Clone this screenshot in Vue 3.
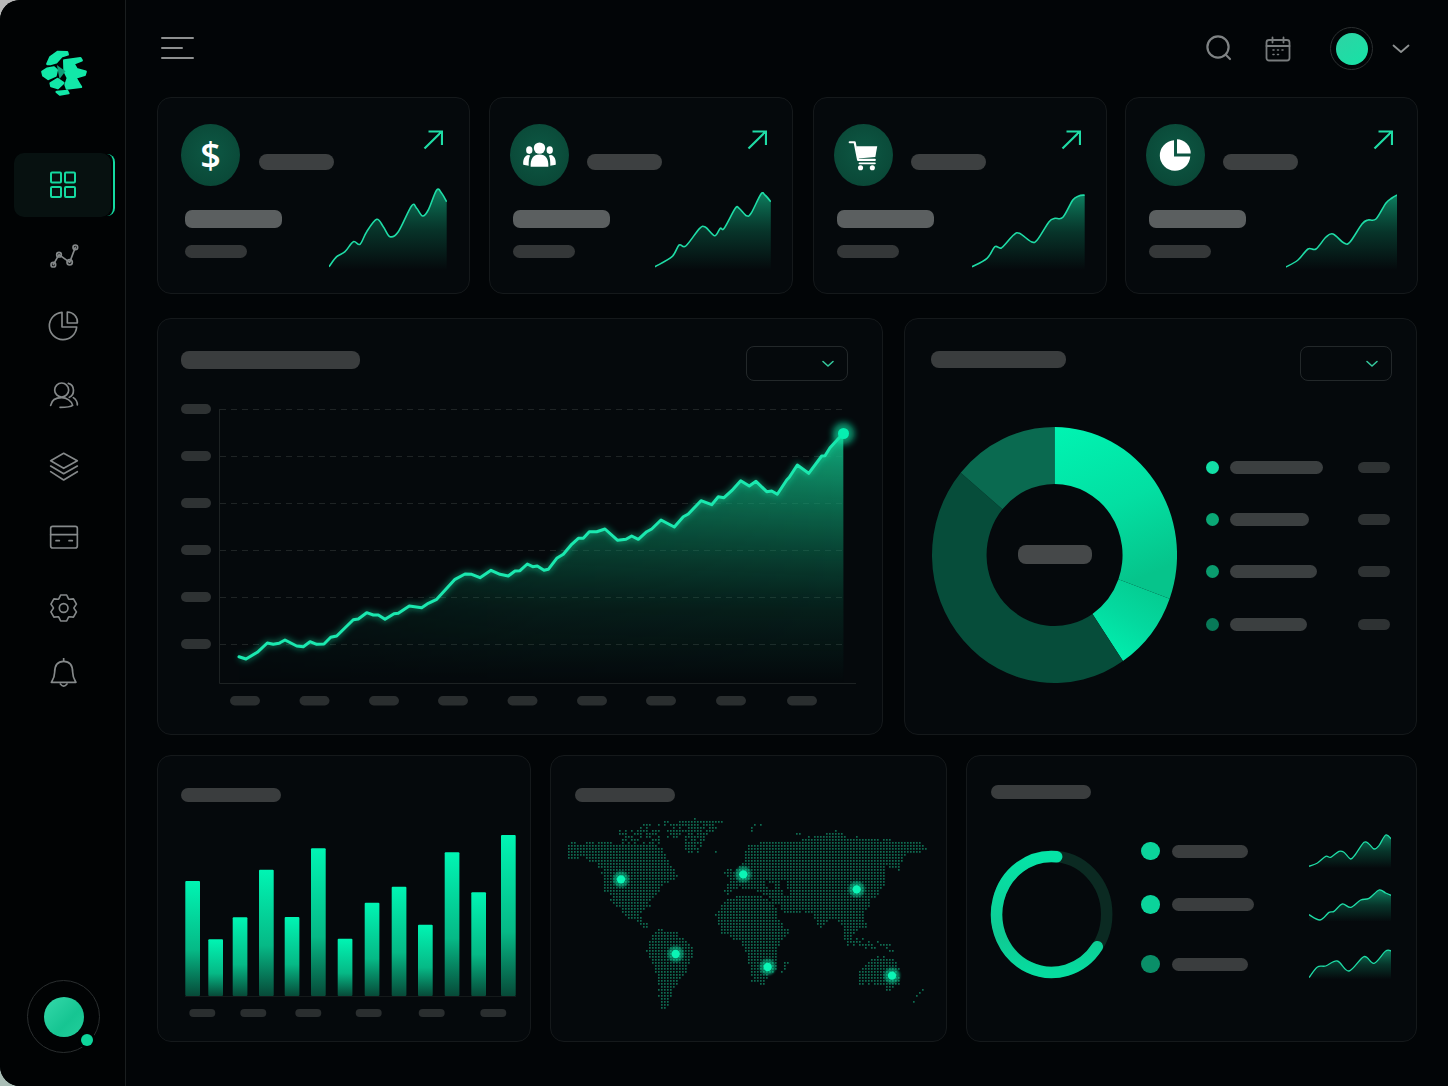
<template>
  <div class="app">
    <svg class="defs" width="0" height="0">
      <defs>
        <linearGradient id="sparkFill" x1="0" y1="0" x2="0" y2="1">
          <stop offset="0" stop-color="#10a87c" stop-opacity="0.75" />
          <stop offset="0.5" stop-color="#0b7a5a" stop-opacity="0.38" />
          <stop offset="1" stop-color="#0b7a5a" stop-opacity="0" />
        </linearGradient>
        <linearGradient id="barFill" x1="0" y1="0" x2="0" y2="1">
          <stop offset="0" stop-color="#00f5b3" />
          <stop offset="0.6" stop-color="#06b986" />
          <stop offset="1" stop-color="#074a38" />
        </linearGradient>
        <filter id="glow" x="-30%" y="-30%" width="160%" height="160%">
          <feGaussianBlur stdDeviation="3" />
        </filter>
      </defs>
    </svg>

    <aside class="sidebar">
      <svg class="logo" viewBox="115 145 160 150">
        <g fill="#12e8a8" stroke="#12e8a8" stroke-width="7" stroke-linejoin="round">
          <polygon points="143,193 152,172 175,156 203,157 205,164 186,170 170,188 152,193" />
          <polygon points="194,182 243,175 247,182 222,192 232,208 259,216 256,226 228,234 240,254 245,262 202,267 198,256 205,235 195,215" />
          <polygon points="128,216 142,207 163,203 172,211 168,228 146,238 131,228" />
          <polygon points="153,251 174,238 192,250 175,266 155,260" />
          <polygon points="171,277 203,274 207,281 181,285" />
        </g>
        <polygon points="172,196 198,215 180,238" fill="#0e9f78" />
      </svg>

      <nav class="nav">
        <div class="nav-item active">
          <svg width="36" height="36" viewBox="0 0 36 36" fill="none" stroke="#14d9a0" stroke-width="2">
            <rect x="6" y="5.5" width="10" height="10" rx="1" />
            <rect x="20" y="5.5" width="10" height="10" rx="1" />
            <rect x="6" y="20" width="10" height="10" rx="1" />
            <rect x="20" y="20" width="10" height="10" rx="1" />
          </svg>
        </div>
        <div v-for="item in navItems" :key="item.name" class="nav-item" :style="{ height: item.h + 'px' }">
          <svg width="36" height="36" :viewBox="item.x + ' ' + item.y + ' 108 108'" fill="none" stroke="#85898a" stroke-width="5" stroke-linecap="round" stroke-linejoin="round">
            <path v-for="d in item.paths" :key="d" :d="d" />
            <circle v-for="c in item.circles" :key="c[0] + '-' + c[1]" :cx="c[0]" :cy="c[1]" :r="c[2]" />
          </svg>
        </div>
      </nav>

      <div class="me">
        <div class="me-face"></div>
        <div class="me-dot"></div>
      </div>
    </aside>

    <main class="main">
      <header class="topbar">
        <div class="burger"><span></span><span class="short"></span><span></span></div>
        <div class="top-right">
          <svg class="top-search" width="28" height="28" viewBox="0 0 28 28" fill="none" stroke="#7f8384" stroke-width="2.2" stroke-linecap="round">
            <circle cx="13" cy="13" r="10.6" />
            <path d="M21 21l4 4" />
          </svg>
          <svg class="top-cal" width="26" height="26" viewBox="0 0 26 26" fill="none" stroke="#787c7d" stroke-width="1.8" stroke-linecap="round">
            <rect x="1.5" y="4" width="23" height="20.5" rx="2.5" />
            <path d="M1.5 10h23M7.5 1.5v5M18.5 1.5v5" />
            <path d="M8 14h1M12.5 14h1M17 14h1M8 18.5h1M12.5 18.5h1" stroke-width="1.6" />
          </svg>
          <div class="top-avatar"><div class="top-face"></div></div>
          <svg width="18" height="10" viewBox="0 0 18 10" fill="none" stroke="#8d9191" stroke-width="1.8" stroke-linecap="round" stroke-linejoin="round">
            <path d="M1.5 1.5L9 8l7.5-6.5" />
          </svg>
        </div>
      </header>

      <section class="stats">
        <article v-for="card in stats" :key="card.key" class="card stat">
          <div class="stat-left">
            <div class="stat-head">
              <div class="stat-icon">
                <span v-if="card.key === 'money'" class="dollar">$</span>
                <svg v-else-if="card.key === 'users'" width="59" height="62" viewBox="0 0 60 62" fill="#fff">
                  <circle cx="30" cy="24" r="5.8" />
                  <ellipse cx="19.6" cy="26" rx="3.2" ry="3.9" />
                  <ellipse cx="40.4" cy="26" rx="3.2" ry="3.9" />
                  <path d="M21 43c-.4-8 2.5-12.5 9-12.5S39.4 35 39 43z" />
                  <path d="M18.5 31c-3.5.5-5.5 4.5-5 10l5.5 1c0-5 .2-8 1.5-10.5z" />
                  <path d="M41.5 31c3.5.5 5.5 4.5 5 10l-5.5 1c0-5-.2-8-1.5-10.5z" />
                </svg>
                <svg v-else-if="card.key === 'cart'" width="59" height="62" viewBox="0 0 60 62" fill="#fff">
                  <path d="M16 18h5l3.5 18h17" fill="none" stroke="#fff" stroke-width="2.2" stroke-linecap="round" stroke-linejoin="round" />
                  <path d="M22.5 22H44l-2 11-17.5 1.5z" />
                  <path d="M26 39.5h15.5" fill="none" stroke="#fff" stroke-width="2" stroke-linecap="round" />
                  <circle cx="27" cy="44" r="2.6" />
                  <circle cx="39" cy="44" r="2.6" />
                </svg>
                <svg v-else width="59" height="62" viewBox="0 0 60 62" fill="#fff">
                  <path d="M28.5 16a15.5 15.5 0 1 0 16.5 16.5H28.5z" />
                  <path d="M31.5 15a14.5 14.5 0 0 1 14 14.5h-14z" />
                </svg>
              </div>
              <div class="pill stat-label"></div>
            </div>
            <div class="pill stat-value"></div>
            <div class="pill stat-sub"></div>
          </div>
          <div class="stat-right">
            <svg class="stat-arrow" width="20" height="20" viewBox="0 0 20 20" fill="none" stroke="#1fdca6" stroke-width="2.2">
              <path d="M1.5 18.5L18.8 1.5M5.5 1.5h13.5v13.5" />
            </svg>
            <svg class="spark" :width="card.spark.w" :height="card.spark.h" :viewBox="card.spark.box">
              <path :d="card.spark.area" fill="url(#sparkFill)" />
              <path :d="card.spark.line" fill="none" stroke="#1fdca6" stroke-width="1.6" />
            </svg>
          </div>
        </article>
      </section>

      <section class="middle">
        <article class="card trend">
          <div class="panel-head">
            <div class="pill trend-title"></div>
            <div class="select">
              <svg width="14" height="8" viewBox="0 0 14 8" fill="none" stroke="#35c79c" stroke-width="1.6" stroke-linecap="round" stroke-linejoin="round"><path d="M2 1.5L7 6l5-4.5" /></svg>
            </div>
          </div>
          <svg class="trend-chart" width="700" height="330" viewBox="170 390 700 330">
            <defs>
              <linearGradient id="trendFill" gradientUnits="userSpaceOnUse" x1="0" y1="433" x2="0" y2="683">
                <stop offset="0" stop-color="#12b784" stop-opacity="0.95" />
                <stop offset="0.35" stop-color="#0e9a6e" stop-opacity="0.58" />
                <stop offset="0.7" stop-color="#0a7a58" stop-opacity="0.2" />
                <stop offset="1" stop-color="#0a7a58" stop-opacity="0" />
              </linearGradient>
              <linearGradient id="trendFade" gradientUnits="userSpaceOnUse" x1="240" y1="0" x2="843" y2="0">
                <stop offset="0" stop-color="#fff" stop-opacity="0.3" />
                <stop offset="0.5" stop-color="#fff" stop-opacity="0.85" />
                <stop offset="1" stop-color="#fff" stop-opacity="1" />
              </linearGradient>
              <mask id="trendMask" maskUnits="userSpaceOnUse" x="170" y="390" width="700" height="330">
                <rect x="170" y="390" width="700" height="330" fill="url(#trendFade)" />
              </mask>
            </defs>
            <rect v-for="y in gridY" :key="'yl' + y" x="181" :y="y - 5" width="30" height="10" rx="5" fill="#2e3233" />
            <rect v-for="x in labelX" :key="'xl' + x" :x="x - 15" y="696" width="30" height="9.5" rx="4.7" fill="#2a2e2f" />
            <line v-for="y in gridY" :key="'g' + y" x1="220" x2="845" :y1="y + 0.5" :y2="y + 0.5" stroke="#1f2425" stroke-dasharray="6 5" />
            <path :d="trendArea" fill="url(#trendFill)" mask="url(#trendMask)" />
            <path d="M219.5 409V683.5H856" fill="none" stroke="#1d2223" />
            <path :d="trendLine" fill="none" stroke="#14e6aa" stroke-width="5" opacity="0.45" filter="url(#glow)" stroke-linejoin="round" />
            <path :d="trendLine" fill="none" stroke="#1be8af" stroke-width="3" stroke-linejoin="round" stroke-linecap="round" />
            <circle cx="843.5" cy="433.5" r="11" fill="#08e6a8" opacity="0.6" filter="url(#glow)" />
            <circle cx="843.5" cy="433.5" r="5.5" fill="#06eeb0" />
          </svg>
        </article>

        <article class="card donut-card">
          <div class="panel-head donut-head">
            <div class="pill donut-title"></div>
            <div class="select small">
              <svg width="14" height="8" viewBox="0 0 14 8" fill="none" stroke="#35c79c" stroke-width="1.6" stroke-linecap="round" stroke-linejoin="round"><path d="M2 1.5L7 6l5-4.5" /></svg>
            </div>
          </div>
          <div class="donut-body">
            <div class="donut-wrap">
              <svg width="245" height="256" viewBox="-100 -100 200 200" preserveAspectRatio="none">
                <defs>
                  <linearGradient id="seg1" x1="0" y1="0" x2="0.3" y2="1">
                    <stop offset="0" stop-color="#00f4b2" />
                    <stop offset="0.55" stop-color="#03dfa2" />
                    <stop offset="1" stop-color="#06c48b" />
                  </linearGradient>
                  <linearGradient id="seg2" x1="0.8" y1="0" x2="0.2" y2="1">
                    <stop offset="0" stop-color="#05c98e" />
                    <stop offset="0.5" stop-color="#04d99f" />
                    <stop offset="1" stop-color="#00f2b0" />
                  </linearGradient>
                </defs>
                <path v-for="seg in donutSegs" :key="seg.fill" :d="seg.d" :fill="seg.fill" />
              </svg>
              <div class="pill donut-center"></div>
            </div>
            <ul class="donut-legend">
              <li v-for="row in donutLegend" :key="row.w">
                <i class="legend-dot" :style="{ background: row.color }"></i>
                <span class="pill legend-bar" :style="{ width: row.w + 'px' }"></span>
                <span class="pill legend-val"></span>
              </li>
            </ul>
          </div>
        </article>
      </section>

      <section class="bottom">
        <article class="card bars-card">
          <div class="pill small-title"></div>
          <svg class="bars" width="350" height="210" viewBox="180 820 350 210">
            <line x1="185" x2="516" y1="996.5" y2="996.5" stroke="#14191a" />
            <rect v-for="b in bars" :key="b[0]" :x="b[0]" :y="996 - b[1]" width="14.7" :height="b[1]" rx="1" fill="url(#barFill)" />
            <rect v-for="x in barLabels" :key="x" :x="x" y="1009" width="26" height="8" rx="4" fill="#2a2e2f" />
          </svg>
        </article>

        <article class="card map-card">
          <div class="pill small-title"></div>
          <svg class="map" width="400" height="230" viewBox="0 0 1200 690">
            <path :d="mapDots" fill="#0f6b50" />
            <g v-for="pin in pins" :key="pin[0]">
              <circle :cx="pin[0]" :cy="pin[1]" r="24" fill="#08e6a8" opacity="0.5" filter="url(#glow)" />
              <circle :cx="pin[0]" :cy="pin[1]" r="12.5" fill="#0bf5b5" />
            </g>
          </svg>
        </article>

        <article class="card mini-card">
          <div class="pill small-title mini-title"></div>
          <div class="mini-body">
            <svg class="ring" width="130" height="135" viewBox="987 848 130 135" fill="none" stroke-width="11.5">
              <defs>
                <linearGradient id="ringFill" x1="0" y1="0" x2="0" y2="1">
                  <stop offset="0" stop-color="#05e3a6" />
                  <stop offset="0.7" stop-color="#0fca93" />
                  <stop offset="1" stop-color="#06dc9f" />
                </linearGradient>
              </defs>
              <ellipse cx="1051.7" cy="914.3" rx="55" ry="58" stroke="#0b2a22" />
              <path d="M1056.7 856.7A55 58 0 1 0 1097.3 946.7" stroke="url(#ringFill)" stroke-linecap="round" />
            </svg>
            <ul class="mini-list">
              <li v-for="row in miniRows" :key="row.w" :style="{ height: row.h + 'px' }">
                <i class="mini-dot" :style="{ background: row.color }"></i>
                <span class="pill mini-bar" :style="{ width: row.w + 'px' }"></span>
                <svg class="mini-spark" :width="row.spark.w" :height="row.spark.h" :viewBox="row.spark.box">
                  <path :d="row.spark.area" fill="url(#sparkFill)" />
                  <path :d="row.spark.line" fill="none" stroke="#1fdca6" stroke-width="1.3" />
                </svg>
              </li>
            </ul>
          </div>
        </article>
      </section>
    </main>
  </div>
</template>

<script setup>
// the reference was measured from 3x crops, so points come in crop units
const crop = (pts, ox, oy, sx = 3, sy = 3) =>
  pts.map(([x, y]) => [ox + x / sx, oy + y / sy])

const fmt = (n) => Math.round(n * 10) / 10

function smooth(pts) {
  let d = `M${fmt(pts[0][0])} ${fmt(pts[0][1])}`
  for (let i = 0; i < pts.length - 1; i++) {
    const p0 = pts[i - 1] || pts[i]
    const p1 = pts[i]
    const p2 = pts[i + 1]
    const p3 = pts[i + 2] || p2
    const c1 = [p1[0] + (p2[0] - p0[0]) / 6, p1[1] + (p2[1] - p0[1]) / 6]
    const c2 = [p2[0] - (p3[0] - p1[0]) / 6, p2[1] - (p3[1] - p1[1]) / 6]
    d += `C${fmt(c1[0])} ${fmt(c1[1])} ${fmt(c2[0])} ${fmt(c2[1])} ${fmt(p2[0])} ${fmt(p2[1])}`
  }
  return d
}

function makeSpark(pts, bottom) {
  const xs = pts.map((p) => p[0])
  const ys = pts.map((p) => p[1])
  const minX = Math.min(...xs)
  const maxX = Math.max(...xs)
  const minY = Math.min(...ys) - 2
  const line = smooth(pts)
  return {
    line,
    area: `${line}L${fmt(maxX)} ${bottom}L${fmt(minX)} ${bottom}Z`,
    box: `${fmt(minX)} ${fmt(minY)} ${fmt(maxX - minX)} ${fmt(bottom - minY)}`,
    w: fmt(maxX - minX),
    h: fmt(bottom - minY)
  }
}

function gearPath(cx, cy) {
  const pt = (r, deg) => {
    const a = (deg * Math.PI) / 180
    return `${fmt(cx + r * Math.cos(a))} ${fmt(cy + r * Math.sin(a))}`
  }
  const parts = []
  for (let i = 0; i < 6; i++) {
    const a = i * 60 - 90
    parts.push(pt(31, a - 28), pt(40, a - 13), pt(40, a + 13), pt(31, a + 28))
  }
  return 'M' + parts.join('L') + 'Z'
}

const navItems = [
  {
    name: 'graph', h: 71, x: 136, y: 712,
    paths: ['M158 792L175 762L207 785L224 740'],
    circles: [[158, 792, 7], [175, 762, 7], [207, 785, 8], [224, 740, 7]]
  },
  { name: 'pie', h: 69, x: 78, y: 21, paths: ['M126 34A41 41 0 1 0 170 78H126Z', 'M142 33A30 30 0 0 1 172 66H142Z'], circles: [] },
  {
    name: 'users', h: 70, x: 78, y: 231,
    paths: ['M92 316C95 300 108 293 125 293C140 293 155 303 158 316Q150 322 120 322', 'M145 250C165 255 165 285 148 292', 'M160 293C168 298 172 305 172 315'],
    circles: [[125, 270, 21]]
  },
  { name: 'layers', h: 71, x: 78, y: 444, paths: ['M131 460L172 482L131 505L92 482Z', 'M92 498L131 521L172 498', 'M92 515L131 540L172 515'], circles: [] },
  { name: 'card', h: 71, x: 78, y: 658, paths: ['M98 680H166Q172 680 172 686V739Q172 745 166 745H98Q92 745 92 739V686Q92 680 98 680Z', 'M92 705H172', 'M108 723H118', 'M147 723H157'], circles: [] },
  { name: 'gear', h: 71, x: 78, y: 871, paths: [gearPath(131, 925)], circles: [[131, 925, 13]] },
  { name: 'bell', h: 65, x: 78, y: 1074, paths: ['M131 1084C110 1084 104 1100 104 1117C104 1132 98 1140 94 1147H168C164 1140 158 1132 158 1117C158 1100 152 1084 131 1084Z', 'M121 1152Q131 1165 141 1152', 'M131 1075V1084'], circles: [] }
]

const spark1 = crop([[537,530],[560,500],[585,485],[610,455],[630,463],[650,425],[680,388],[700,410],[720,440],[745,425],[785,347],[800,355],[818,378],[835,360],[860,300],[875,310],[890,335]], 150, 90)
const spark2 = crop([[417,500],[460,470],[478,435],[495,438],[530,385],[545,382],[568,407],[582,385],[592,385],[620,325],[630,325],[648,347],[660,340],[685,282],[695,285],[710,305]], 490, 100, 2.529)
const spark3 = crop([[1220,500],[1258,475],[1278,440],[1295,443],[1325,405],[1340,400],[1370,425],[1385,420],[1415,365],[1430,355],[1450,352],[1475,300],[1490,288],[1505,285]], 490, 100, 2.529)
const spark4 = [[1286,267],[1298,260],[1308,249],[1316,249],[1326,237],[1333,234],[1344,243],[1350,242],[1362,224],[1368,220],[1376,219],[1386,203],[1392,198],[1397,195]]

const stats = [
  { key: 'money', spark: makeSpark(spark1, 270) },
  { key: 'users', spark: makeSpark(spark2, 270) },
  { key: 'cart', spark: makeSpark(spark3, 270) },
  { key: 'pie', spark: makeSpark(spark4, 270) }
]

const gridY = [409, 456, 503, 550, 597, 644]
const labelX = [245, 314.5, 384, 453, 522.5, 592, 661, 731, 802]

const trendPts = [
  ...crop([[207,800],[228,807],[262,787],[292,759],[310,763],[327,760],[345,750],[380,768],[400,770],[420,755],[440,763],[462,762],[482,742],[500,738],[550,689],[565,687],[590,668],[610,675],[625,675],[645,688],[672,671],[685,670],[718,648],[755,653],[775,640],[800,628],[855,568],[885,552],[905,553],[930,563],[963,541],[990,553],[1015,558],[1035,543]], 170, 390),
  ...crop([[0,512],[22,492],[38,500],[52,498],[72,511],[85,508],[110,475],[130,463],[155,433],[175,415],[190,415],[208,395],[230,395],[255,387],[293,421],[318,418],[335,408],[355,418],[380,395],[395,387],[423,360],[463,381],[490,350],[505,342],[543,302],[575,314],[595,290],[612,293],[635,272],[662,242],[688,258],[708,244],[740,275],[755,273],[772,283],[800,240],[808,232],[832,195],[866,220],[905,168],[915,167],[930,143],[970,100]], 520, 400)
]
const trendLine = 'M' + trendPts.map((p) => `${fmt(p[0])} ${fmt(p[1])}`).join('L')
const trendArea = `${trendLine}L843.5 683L${fmt(trendPts[0][0])} 683Z`

function arcSeg(a0, a1, R = 100, r = 55.5) {
  const pt = (rad, deg) => {
    const a = ((deg - 90) * Math.PI) / 180
    return `${fmt(rad * Math.cos(a))} ${fmt(rad * Math.sin(a))}`
  }
  const large = a1 - a0 > 180 ? 1 : 0
  return `M${pt(R, a0)}A${R} ${R} 0 ${large} 1 ${pt(R, a1)}L${pt(r, a1)}A${r} ${r} 0 ${large} 0 ${pt(r, a0)}Z`
}

const donutSegs = [
  { d: arcSeg(0, 110), fill: 'url(#seg1)' },
  { d: arcSeg(110, 146), fill: 'url(#seg2)' },
  { d: arcSeg(146, 310), fill: '#064d3a' },
  { d: arcSeg(310, 360), fill: '#0a6a50' }
]

const donutLegend = [
  { w: 93, color: '#12dfa6' },
  { w: 79, color: '#0aa775' },
  { w: 87, color: '#0a9c6e' },
  { w: 77, color: '#087a58' }
]

const bars = [
  [185.3, 115], [208.3, 56.7], [232.7, 78.7], [259, 126.3], [284.7, 79], [311, 147.7], [337.7, 57.3],
  [364.7, 93.3], [391.7, 109.3], [418, 71.3], [444.7, 143.7], [471.3, 103.7], [501, 161]
]
const barLabels = [189.3, 240.3, 295.3, 355.7, 418.7, 480.3]

// land outlines in crop units, density below 1 thins the dots out
const land = [
  { d: 0.55, p: [[185,95],[280,70],[350,55],[400,75],[380,110],[330,130],[250,130],[200,120]] },
  { d: 0.8, p: [[350,65],[420,55],[520,62],[470,110],[430,170],[400,150],[395,100]] },
  { d: 1, p: [[48,130],[130,122],[240,130],[330,135],[350,170],[385,230],[340,250],[310,290],[290,320],[270,345],[300,395],[285,385],[250,360],[220,340],[190,310],[160,260],[150,200],[100,170],[50,180]] },
  { d: 1, p: [[290,420],[320,380],[380,395],[435,445],[410,510],[370,560],[350,630],[325,620],[325,550],[290,450]] },
  { d: 1, p: [[495,340],[530,290],[610,280],[670,300],[690,350],[715,390],[680,440],[675,500],[640,550],[605,550],[590,470],[570,420],[510,400]] },
  { d: 1, p: [[700,480],[712,475],[700,515],[690,515]] },
  { d: 1, p: [[520,270],[540,225],[570,190],[590,135],[650,120],[720,125],[760,110],[860,90],[890,110],[1000,115],[1120,125],[1130,150],[1060,165],[1050,210],[1000,190],[1005,250],[960,300],[940,340],[950,380],[920,380],[890,440],[870,370],[840,350],[810,390],[780,340],[750,335],[700,340],[670,300],[630,280],[600,285],[585,265],[560,260],[525,280]] },
  { d: 1, p: [[1040,180],[1058,175],[1050,212],[1040,205]] },
  { d: 0.6, p: [[880,400],[1010,430],[1040,450],[960,450],[900,430]] },
  { d: 1, p: [[920,510],[980,465],[1040,480],[1050,550],[1010,575],[990,550],[920,550]] },
  { d: 0.7, p: [[1080,600],[1115,565],[1120,575],[1090,605]] },
  { d: 1, p: [[520,210],[545,195],[548,225],[525,230]] },
  { d: 0.7, p: [[490,150],[515,150],[510,158],[495,158]] },
  { d: 0.6, p: [[590,75],[630,72],[620,90],[595,88]] },
  { d: 0.6, p: [[720,100],[755,90],[745,110]] }
]
const seas = [
  [[540,265],[625,268],[645,290],[600,282],[550,280]],
  [[640,243],[682,250],[662,266],[645,260]],
  [[690,240],[708,240],[712,285],[695,280]],
  [[670,335],[685,335],[715,385],[705,385]],
  [[730,335],[770,330],[765,350]]
]

function inside(poly, x, y) {
  let hit = false
  for (let i = 0, j = poly.length - 1; i < poly.length; j = i++) {
    const [xi, yi] = poly[i]
    const [xj, yj] = poly[j]
    if (yi > y !== yj > y && x < ((xj - xi) * (y - yi)) / (yj - yi) + xi) hit = !hit
  }
  return hit
}

const noise = (a, b) => {
  const s = Math.sin(a * 12.9898 + b * 78.233) * 43758.5453
  return s - Math.floor(s)
}

function buildDots() {
  let d = ''
  for (let y = 45; y < 650; y += 9) {
    for (let x = 36; x < 1140; x += 9) {
      // shake the test point a little so the coasts come out rough
      const tx = x + (noise(x, y) - 0.5) * 8
      const ty = y + (noise(y, x) - 0.5) * 8
      const area = land.find((l) => inside(l.p, tx, ty))
      if (!area || seas.some((s) => inside(s, tx, ty))) continue
      if (noise(x + 3, y + 7) > area.d) continue
      d += `M${x} ${y}h5v5h-5z`
    }
  }
  return d
}

const mapDots = buildDots()
const pins = [[213, 238], [580, 223], [920, 268], [377, 462], [653, 501], [1026, 527]]

const mini1 = crop([[1015,162],[1040,152],[1065,132],[1080,135],[1105,117],[1120,120],[1140,140],[1155,125],[1180,90],[1195,95],[1210,110],[1225,100],[1245,68],[1262,80]], 970, 810)
const mini2 = crop([[1015,312],[1048,328],[1075,305],[1090,302],[1115,280],[1140,290],[1170,268],[1195,263],[1225,238],[1245,247],[1262,254]], 970, 810)
const mini3 = crop([[1015,490],[1040,458],[1065,455],[1100,440],[1135,470],[1180,427],[1210,447],[1245,410],[1262,410]], 970, 810)

const miniRows = [
  { h: 54, w: 76, color: '#0bd49b', spark: makeSpark(mini1, 866) },
  { h: 53, w: 82, color: '#0bd49b', spark: makeSpark(mini2, 921) },
  { h: 66, w: 76, color: '#0a8f68', spark: makeSpark(mini3, 975) }
]
</script>

<style scoped>
.app {
  width: 1448px;
  height: 1086px;
  display: flex;
  overflow: hidden;
  background: #020507;
  border-radius: 20px 0 0 20px;
  font-family: "Open Sans", "Liberation Sans", sans-serif;
}

.defs {
  position: absolute;
}

svg {
  display: block;
}

.sidebar {
  box-sizing: border-box;
  width: 126px;
  flex: none;
  display: flex;
  flex-direction: column;
  align-items: flex-start;
  background: #010304;
  border-right: 1px solid #1a1e1f;
}

.logo {
  width: 53px;
  height: 50px;
  margin: 48px 0 0 38px;
}

.nav {
  margin-top: 55px;
  display: flex;
  flex-direction: column;
  width: 100%;
}

.nav-item {
  width: 100px;
  margin-left: 14px;
  display: flex;
  align-items: center;
  justify-content: center;
  position: relative;
}

.nav-item.active {
  width: 97px;
  height: 64px;
  margin-bottom: 3px;
  background: #071110;
  border-radius: 10px;
}

.nav-item.active::after {
  content: "";
  position: absolute;
  top: 1px;
  bottom: 1px;
  right: -4px;
  width: 8px;
  border-right: 2px solid #14d9a0;
  border-radius: 0 8px 8px 0;
}

.me {
  box-sizing: border-box;
  position: relative;
  width: 73px;
  height: 73px;
  margin: auto 0 33px 27px;
  border: 1px solid #2a2e2f;
  border-radius: 50%;
  display: flex;
  align-items: center;
  justify-content: center;
}

.me-face {
  width: 40px;
  height: 40px;
  border-radius: 50%;
  background: linear-gradient(135deg, #35d9aa, #16c592 60%, #22cf9c);
}

.me-dot {
  position: absolute;
  right: 6px;
  bottom: 6px;
  width: 12px;
  height: 12px;
  border-radius: 50%;
  background: #0ed59b;
  box-shadow: 0 0 0 3px #010304;
}

.main {
  flex: 1;
  min-width: 0;
  padding-left: 31px;
}

.topbar {
  height: 97px;
  display: flex;
  align-items: center;
  justify-content: space-between;
  padding: 0 38px 0 4px;
  box-sizing: border-box;
}

.burger {
  width: 33px;
  display: flex;
  flex-direction: column;
  gap: 7.5px;
  margin-top: -1px;
}

.burger span {
  display: block;
  height: 2.5px;
  border-radius: 2px;
  background: #8e9090;
}

.burger .short {
  width: 22px;
}

.top-right {
  display: flex;
  align-items: center;
}

.top-search {
  margin-right: 32px;
  margin-top: -1px;
}

.top-cal {
  margin-right: 39px;
}

.top-avatar {
  box-sizing: border-box;
  width: 43px;
  height: 43px;
  margin-right: 19px;
  border: 1px solid #2b2f30;
  border-radius: 50%;
  display: flex;
  align-items: center;
  justify-content: center;
}

.top-face {
  width: 32px;
  height: 32px;
  border-radius: 50%;
  background: linear-gradient(145deg, #2ed3a4, #16e2a6);
}

.card {
  box-sizing: border-box;
  background: #05090c;
  border: 1px solid #15191b;
  border-radius: 14px;
}

.pill {
  display: block;
  border-radius: 99px;
  background: #3a3d3e;
}

.stats {
  display: flex;
}

.stat {
  height: 197px;
  display: flex;
  justify-content: space-between;
  padding: 0 21px 0 20px;
}

.stat:nth-child(1) {
  width: 313px;
  margin-right: 19px;
  padding: 0 22px 0 23px;
}

.stat:nth-child(2) {
  width: 304px;
  margin-right: 20px;
}

.stat:nth-child(3) {
  width: 294px;
  margin-right: 18px;
}

.stat:nth-child(4) {
  width: 293px;
  padding-right: 20px;
}

/* the label runs over the sparkline's column, the sparkline sits lower */
.stat-left {
  flex: 0 0 110px;
  min-width: 0;
}

.stat-head {
  display: flex;
  align-items: flex-start;
  padding-top: 26px;
}

.stat-icon {
  width: 59px;
  height: 62px;
  flex: none;
  border-radius: 50%;
  background: radial-gradient(circle at 50% 45%, #0d5844, #094333);
  display: flex;
  align-items: center;
  justify-content: center;
}

.dollar {
  color: #fff;
  font-size: 36px;
  font-weight: 600;
  line-height: 1;
}

.stat-label {
  width: 75px;
  height: 16px;
  flex: none;
  margin: 30px 0 0 19px;
  border-radius: 8px;
  background: #3d4041;
}

.stat:not(:first-child) .stat-label {
  margin-left: 18px;
}

.stat-value {
  width: 97px;
  height: 18px;
  margin: 24px 0 0 4px;
  border-radius: 7px;
  background: #5b5f60;
}

.stat-sub {
  width: 62px;
  height: 13px;
  margin: 17px 0 0 4px;
  background: #343738;
}

.stat:not(:first-child) .stat-value,
.stat:not(:first-child) .stat-sub {
  margin-left: 3px;
}

.stat-right {
  display: flex;
  flex-direction: column;
  align-items: flex-end;
}

.stat-arrow {
  margin: 32px 4px 0 0;
}

.stat-right .spark {
  margin-top: auto;
  margin-bottom: 23px;
}

.middle {
  display: flex;
  margin-top: 24px;
}

.trend {
  width: 726px;
  height: 417px;
  margin-right: 21px;
}

.panel-head {
  display: flex;
  justify-content: space-between;
  align-items: flex-start;
  padding: 27px 34px 0 23px;
}

.trend-title {
  width: 179px;
  height: 18px;
  margin-top: 5px;
  border-radius: 8px;
}

.select {
  box-sizing: border-box;
  width: 102px;
  height: 35px;
  padding-right: 12px;
  border: 1px solid #23282a;
  border-radius: 8px;
  display: flex;
  align-items: center;
  justify-content: flex-end;
}

.select.small {
  width: 92px;
}

.trend-chart {
  margin: 9px 0 0 12px;
}

.donut-card {
  width: 513px;
  height: 417px;
}

.donut-head {
  padding: 27px 24px 0 26px;
}

.donut-title {
  width: 135px;
  height: 17px;
  margin-top: 5px;
  border-radius: 8px;
}

.donut-body {
  display: flex;
  align-items: flex-start;
  margin: 46px 0 0 27px;
}

.donut-wrap {
  position: relative;
}

.donut-center {
  position: absolute;
  left: 86px;
  top: 118px;
  width: 74px;
  height: 19px;
  border-radius: 8px;
  background: #454849;
}

.donut-legend {
  list-style: none;
  width: 184px;
  margin: 14px 0 0 29px;
  padding: 0;
}

.donut-legend li {
  height: 52.4px;
  display: flex;
  align-items: center;
}

.legend-dot {
  width: 13px;
  height: 13px;
  flex: none;
  border-radius: 50%;
}

.legend-bar {
  height: 13px;
  margin-left: 11px;
  background: #3b3f40;
}

.legend-val {
  width: 32px;
  height: 11px;
  margin-left: auto;
  background: #2e3233;
}

.bottom {
  display: flex;
  margin-top: 20px;
}

.bars-card {
  width: 374px;
  height: 287px;
  margin-right: 19px;
}

.map-card {
  width: 397px;
  height: 287px;
  margin-right: 19px;
}

.mini-card {
  width: 451px;
  height: 287px;
}

.small-title {
  width: 100px;
  height: 14px;
  margin: 32px 0 0 23px;
}

.bars {
  margin: 18px 0 0 22px;
}

.map-card .small-title {
  margin-left: 24px;
}

.map {
  margin: -2px 0 0 -1px;
}

.mini-title {
  margin: 29px 0 0 24px;
}

.mini-body {
  display: flex;
  align-items: flex-start;
  margin: 25px 0 0 20px;
}

.ring {
  margin-top: 24px;
}

.mini-list {
  list-style: none;
  width: 250px;
  margin: 0 0 0 24px;
  padding: 0;
}

.mini-list li {
  display: flex;
  align-items: center;
}

.mini-dot {
  width: 18.6px;
  height: 18.6px;
  flex: none;
  border-radius: 50%;
}

.mini-bar {
  height: 13px;
  margin-left: 12.7px;
}

.mini-spark {
  margin-left: auto;
}
</style>

<style>
body {
  margin: 0;
  background: linear-gradient(180deg, #b8b8b8, #a9bdb5);
}
</style>
